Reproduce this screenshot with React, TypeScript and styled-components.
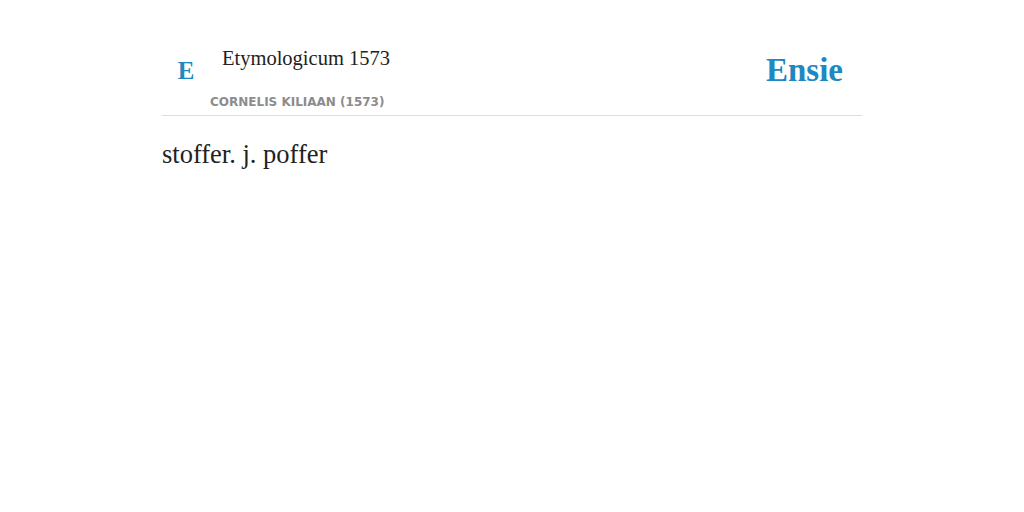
import styled, { createGlobalStyle } from "styled-components";

const GlobalStyle = createGlobalStyle`
  body {
    margin: 0;
    background: #ffffff;
    font-family: "Liberation Serif", serif;
    color: #222222;
  }
`;

const StyledPage = styled.div`
  width: 700px;
  margin: 0 auto;
  padding-top: 40px;
`;

const StyledHeader = styled.header`
  display: flex;
  justify-content: space-between;
  align-items: flex-start;
  border-bottom: 1px solid #dddddd;
  height: 76px;
  box-sizing: border-box;
`;

const StyledSource = styled.div`
  display: flex;
  flex-direction: column;
`;

const StyledSourceRow = styled.div`
  display: flex;
  align-items: flex-start;
`;

const StyledLogo = styled.span`
  width: 48px;
  padding-top: 18px;
  text-align: center;
  font-family: "Liberation Serif", serif;
  font-weight: bold;
  font-size: 25px;
  color: #1e88c0;
  line-height: 1;
`;

const StyledTitle = styled.h1`
  margin: 0 0 0 12px;
  font-family: "Liberation Serif", serif;
  font-weight: normal;
  font-size: 20.5px;
  line-height: 36px;
  color: #222222;
`;

const StyledAuthor = styled.span`
  margin: 12px 0 0 48px;
  font-family: "DejaVu Sans", sans-serif;
  font-weight: bold;
  font-size: 12px;
  color: #8c8c8c;
  text-transform: uppercase;
`;

const StyledBrand = styled.span`
  margin: 10px 19px 0 0;
  font-family: "Liberation Serif", serif;
  font-weight: bold;
  font-size: 33px;
  color: #1e88c0;
  line-height: 40px;
`;

const StyledDefinition = styled.p`
  margin: 21px 0 0 0;
  font-family: "Liberation Serif", serif;
  font-size: 26.5px;
  line-height: 34px;
  color: #222222;
`;

export default function App() {
  return (
    <>
      <GlobalStyle />
      <StyledPage>
        <StyledHeader>
          <StyledSource>
            <StyledSourceRow>
              <StyledLogo>E</StyledLogo>
              <StyledTitle>Etymologicum 1573</StyledTitle>
            </StyledSourceRow>
            <StyledAuthor>Cornelis Kiliaan (1573)</StyledAuthor>
          </StyledSource>
          <StyledBrand>Ensie</StyledBrand>
        </StyledHeader>
        <StyledDefinition>stoffer. j. poffer</StyledDefinition>
      </StyledPage>
    </>
  );
}
